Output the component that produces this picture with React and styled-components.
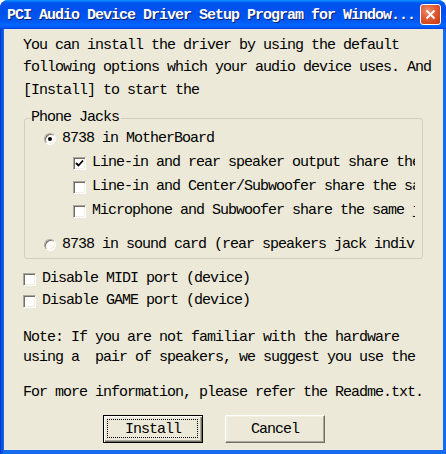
import React from "react";
import styled, { createGlobalStyle } from "styled-components";

const GlobalStyle = createGlobalStyle`
  html, body {
    margin: 0;
    padding: 0;
    background: #ffffff;
  }
`;

const Window = styled.div`
  width: 446px;
  height: 454px;
  display: flex;
  flex-direction: column;
  box-sizing: border-box;
  border-radius: 8px 8px 0 0;
  overflow: hidden;
  background: linear-gradient(90deg, #0019cf 0, #0855dd 1px, #0855dd 3px, #166aee 3px);
  font-family: "Liberation Mono", "DejaVu Sans Mono", monospace;
  font-size: 15px;
  letter-spacing: -1px;
  color: #000;
`;

const TitleBar = styled.div`
  height: 29px;
  flex: none;
  display: flex;
  align-items: center;
  justify-content: space-between;
  padding: 0 5px 0 7px;
  background: linear-gradient(
    180deg,
    #0997ff 0%,
    #0053ee 10%,
    #0050ee 40%,
    #0058f0 70%,
    #0066ff 88%,
    #005bff 94%,
    #003dd7 100%
  );
`;

const TitleText = styled.span`
  color: #fff;
  font-weight: bold;
  font-size: 15px;
  letter-spacing: -1px;
  white-space: nowrap;
  text-shadow: 1px 1px 0 #0a1f6e;
  margin-top: 1px;
`;

const CloseButton = styled.div`
  width: 21px;
  height: 21px;
  box-sizing: border-box;
  border: 1px solid #fff;
  border-radius: 3px;
  display: flex;
  align-items: center;
  justify-content: center;
  background: radial-gradient(circle at 35% 30%, #f08c6c 0%, #e05a34 45%, #c4380c 100%);
`;

const Client = styled.div`
  flex: 1;
  margin: 0 3px 4px 4px;
  background: #ece9d8;
  padding: 5px 20px 0 19px;
  display: flex;
  flex-direction: column;
  min-height: 0;
`;

const Line = styled.div`
  height: ${(p) => p.$h || 23}px;
  line-height: ${(p) => p.$h || 23}px;
  margin-top: ${(p) => p.$top || 0}px;
  white-space: pre;
`;

const Group = styled.fieldset`
  margin: 7px 0 0 1px;
  padding: 0 7px 1px 6px;
  border: 1px solid #d0d0bf;
  border-radius: 3px;
  min-width: 0;
  display: flex;
  flex-direction: column;
`;

const Legend = styled.legend`
  padding: 0 2px 0 0;
  line-height: 18px;
  height: 18px;
`;

const OptionRow = styled.div`
  height: ${(p) => p.$h || 24}px;
  display: flex;
  align-items: center;
  gap: ${(p) => p.$gap || 6}px;
  padding-left: ${(p) => p.$indent || 0}px;
  margin-top: ${(p) => p.$top || 0}px;
  white-space: nowrap;
  overflow: hidden;
`;

const Label = styled.span`
  white-space: pre;
  line-height: 18px;
`;

const CheckBox = styled.span`
  flex: none;
  width: 13px;
  height: 13px;
  box-sizing: border-box;
  border: 1px solid;
  border-color: #aca899 #ffffff #ffffff #aca899;
  box-shadow: inset 1px 1px 0 #716f64, inset -1px -1px 0 #f1efe2;
  background: #fff;
  display: flex;
  align-items: center;
  justify-content: center;
`;

const RadioBox = styled.span`
  flex: none;
  width: 12px;
  height: 12px;
  box-sizing: border-box;
  border-radius: 50%;
  border: 1px solid;
  border-color: #aca899 #ffffff #ffffff #aca899;
  box-shadow: inset 1px 1px 0 #716f64, inset -1px -1px 0 #f1efe2;
  background: #fff;
  display: flex;
  align-items: center;
  justify-content: center;

  &::after {
    content: "";
    width: 4px;
    height: 4px;
    border-radius: 50%;
    background: ${(p) => (p.$checked ? "#000" : "transparent")};
  }
`;

const ButtonRow = styled.div`
  display: flex;
  gap: 22px;
  margin: 12px 0 0 80px;
`;

const Button = styled.div`
  position: relative;
  width: 100px;
  height: 28px;
  box-sizing: border-box;
  display: flex;
  align-items: center;
  justify-content: center;
  background: #ece9d8;
  border: 1px solid;
  border-color: ${(p) => (p.$default ? "#000" : "#fff #716f64 #716f64 #fff")};
  box-shadow: ${(p) =>
    p.$default
      ? "inset 1px 1px 0 #fff, inset -1px -1px 0 #716f64, inset -2px -2px 0 #aca899"
      : "inset -1px -1px 0 #aca899, inset 1px 1px 0 #f1efe2"};

  &::after {
    content: "";
    display: ${(p) => (p.$default ? "block" : "none")};
    position: absolute;
    inset: 3px 4px 4px 3px;
    border: 1px dotted #000;
  }
`;

function Check({ checked }) {
  return (
    <CheckBox>
      {checked && (
        <svg width="9" height="9" viewBox="0 0 9 9">
          <path d="M1 4 L3.5 6.5 L8 1.5" stroke="#000" strokeWidth="1.8" fill="none" />
        </svg>
      )}
    </CheckBox>
  );
}

const jackOptions = [
  { text: "Line-in and rear speaker output share the same jack", checked: true },
  { text: "Line-in and Center/Subwoofer share the same jack", checked: false },
  { text: "Microphone and Subwoofer share the same jack", checked: false },
];

export default function App() {
  return (
    <>
      <GlobalStyle />
      <Window>
        <TitleBar>
          <TitleText>PCI Audio Device Driver Setup Program for Window...</TitleText>
          <CloseButton>
            <svg width="11" height="11" viewBox="0 0 11 11">
              <path d="M1.5 1.5 L9.5 9.5 M9.5 1.5 L1.5 9.5" stroke="#fff" strokeWidth="2" />
            </svg>
          </CloseButton>
        </TitleBar>
        <Client>
          <Line>You can install the driver by using the default</Line>
          <Line $h={22}>following options which your audio device uses. And</Line>
          <Line>[Install] to start the</Line>

          <Group>
            <Legend>Phone Jacks</Legend>
            <OptionRow $indent={13} $gap={6}>
              <RadioBox $checked />
              <Label>8738 in MotherBoard</Label>
            </OptionRow>
            {jackOptions.map((o) => (
              <OptionRow key={o.text} $indent={42}>
                <Check checked={o.checked} />
                <Label>{o.text}</Label>
              </OptionRow>
            ))}
            <OptionRow $indent={13} $gap={6} $top={10}>
              <RadioBox />
              <Label>8738 in sound card (rear speakers jack individually)</Label>
            </OptionRow>
          </Group>

          <OptionRow $h={22} $top={9} $gap={6}>
            <Check />
            <Label>Disable MIDI port (device)</Label>
          </OptionRow>
          <OptionRow $h={22} $gap={6}>
            <Check />
            <Label>Disable GAME port (device)</Label>
          </OptionRow>

          <Line $h={20} $top={16}>
            Note: If you are not familiar with the hardware
          </Line>
          <Line $h={20}>using a  pair of speakers, we suggest you use the</Line>
          <Line $h={20} $top={15}>
            For more information, please refer the Readme.txt.
          </Line>

          <ButtonRow>
            <Button $default>Install</Button>
            <Button>Cancel</Button>
          </ButtonRow>
        </Client>
      </Window>
    </>
  );
}
